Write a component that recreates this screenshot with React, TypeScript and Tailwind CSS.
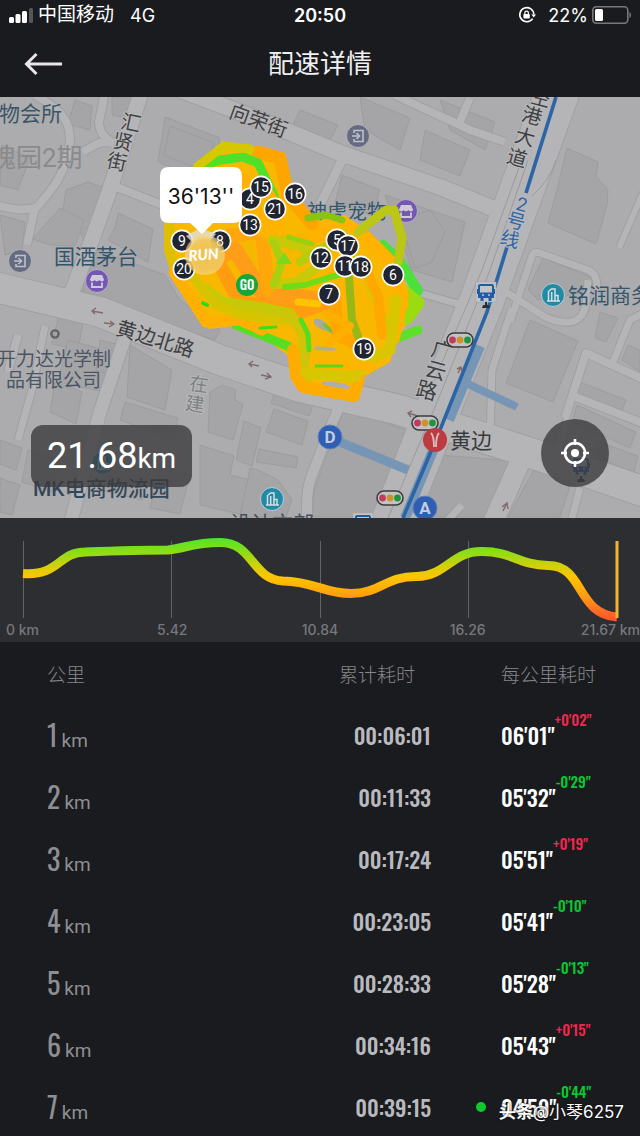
import React from 'react';

interface Split {
  km: number;
  total: string;
  pace: string;
  delta: string;
  fastest?: boolean;
}

interface Pin {
  label: string;
  x: number;
  y: number;
}

const splits: Split[] = [
  { km: 1, total: '00:06:01', pace: `06'01"`, delta: `+0'02"` },
  { km: 2, total: '00:11:33', pace: `05'32"`, delta: `-0'29"` },
  { km: 3, total: '00:17:24', pace: `05'51"`, delta: `+0'19"` },
  { km: 4, total: '00:23:05', pace: `05'41"`, delta: `-0'10"` },
  { km: 5, total: '00:28:33', pace: `05'28"`, delta: `-0'13"` },
  { km: 6, total: '00:34:16', pace: `05'43"`, delta: `+0'15"` },
  { km: 7, total: '00:39:15', pace: `04'59"`, delta: `-0'44"`, fastest: true }
];

const pins: Pin[] = [
  { label: '4', x: 250, y: 199 },
  { label: '15', x: 261, y: 187 },
  { label: '16', x: 295, y: 194 },
  { label: '21', x: 275, y: 209 },
  { label: '13', x: 250, y: 225 },
  { label: '9', x: 182, y: 241 },
  { label: '8', x: 220, y: 241 },
  { label: '20', x: 184, y: 269 },
  { label: '5', x: 337, y: 240 },
  { label: '17', x: 348, y: 246 },
  { label: '12', x: 321, y: 258 },
  { label: '11', x: 345, y: 266 },
  { label: '18', x: 361, y: 267 },
  { label: '6', x: 393, y: 275 },
  { label: '7', x: 329, y: 294 },
  { label: '19', x: 364, y: 349 }
];

// Street centre lines: [path, width]
const roads: [string, number][] = [
  ['M-5 287L100 312L220 360L300 387L400 410L450 427L540 456L645 492', 30],
  ['M558 90L482 300L440 405L392 525', 44],
  ['M142 90L108 195L90 245L68 302', 15],
  ['M126 334L100 412L70 525', 13],
  ['M165 84L260 120L340 153L440 187L492 208', 16],
  ['M343 158L320 205', 9],
  ['M114 186L165 206', 8],
  ['M35 95C58 108 70 118 70 140C66 175 52 190 37 207C25 212 14 209 -5 205', 8],
  ['M35 207L27 245', 8],
  ['M105 92L99 122C100 134 104 138 114 143', 8],
  ['M114 143C98 140 95 146 82 152', 8],
  ['M645 188L619 248', 6],
  ['M510 322L532 256Q534 251 540 253L588 270Q598 274 597 290', 7],
  ['M500 288L545 317Q580 332 586 305L588 280', 7],
  ['M512 308L492 370L490 438', 7],
  ['M565 418L586 353L645 380', 8],
  ['M645 312L630 320L613 362', 7],
  ['M573 396L645 424', 8],
  ['M568 418L552 470', 8],
  ['M520 462L492 525', 20],
  ['M580 488L570 525', 7],
  ['M462 505L446 522', 7],
  ['M341 403L329 430L312 475C306 490 307 505 307 525', 10],
  ['M387 250C408 262 412 275 403 300', 8],
  ['M395 95C430 112 450 120 470 130L505 142', 8],
  ['M470 98L460 122', 8],
  ['M420 293L462 305', 7],
  ['M18 335L8 372', 8],
  ['M45 326L32 390L18 440', 7]
];

const buildings = [
  'M165 117L220 138L208 182L158 162Z',
  'M170 126L214 143L205 172L164 155Z',
  'M63 210L66 190L88 182L110 190L86 245L80 232L60 213Z',
  'M36 235L60 208L84 220L75 246L50 245L30 238Z',
  'M118 213L153 229L148 262L108 240L115 227Z',
  'M97 250L165 275L180 300L220 330L215 340L80 298Z',
  'M2 145L30 158L18 190L0 185Z',
  'M0 215L25 222L22 250L5 255Z',
  'M75 100L92 106L90 130L68 124Z',
  'M112 97L135 97L128 118L112 115Z',
  'M300 110L338 125L325 150L288 135Z',
  'M360 97L410 118L400 150L365 130Z',
  'M425 130L470 150L460 176L420 160Z',
  'M440 100L495 122L485 150L450 130Z',
  'M342 175L380 190L372 215L335 203Z',
  'M385 195L465 222L452 282L412 270L398 230Z',
  'M400 220L430 210L445 232L432 262L415 268Z',
  'M567 148L598 162L596 176L608 190L607 205L596 244L548 223L557 190Z',
  'M543 258L596 279L590 292L538 300L528 290Z',
  'M530 320L578 341L553 402L506 383Z',
  'M600 312L618 318L606 342L595 338Z',
  'M628 345L640 350L640 372L622 360Z',
  'M580 382L626 400L620 416L574 396Z',
  'M577 405L636 432L630 448L572 422Z',
  'M600 442L638 456L634 472L596 458Z',
  'M130 345L172 370L165 410L127 397Z',
  'M125 402L178 418L174 440L120 420Z',
  'M60 310L84 318L78 350L52 344Z',
  'M68 340L112 352L104 392L58 382Z',
  'M100 340L120 345L112 375L96 370Z',
  'M55 382L82 392L76 424L50 412Z',
  'M0 440L22 448L16 470L0 464Z',
  'M28 450L60 460L52 492L22 482Z',
  'M0 478L20 485L12 515L0 512Z',
  'M108 460L150 470L142 500L100 490Z',
  'M160 465L190 475L180 514L150 508Z',
  'M210 392L222 385L236 390L235 400L243 404L233 440L208 432Z',
  'M276 389L314 402L309 416L271 403Z',
  'M274 409L308 421L302 445L266 432Z',
  'M259 449L298 457L296 468L256 462Z',
  'M244 421L261 428L252 466L236 460Z',
  'M200 445L234 456L230 475L250 480L240 514L200 505Z',
  'M258 470L278 480L292 500L286 517L240 517L250 468Z',
  'M344 409L406 430L382 500L372 517L312 517L314 490Z',
  'M440 455L514 461L490 517L420 517Z',
  'M535 468L572 480L560 517L508 517Z'
];

// Overlapping laps of the run, drawn back to front: [path, colour, width]
const laps: [string, string, number][] = [
  ['M383 245L400 262L418 291L404 292', '#4be03a', 10],
  ['M400 288L418 303L407 318', '#9bdc10', 13],
  ['M398 338L418 330', '#5de02a', 9],
  ['M236 325L288 346L298 357', '#58de20', 9],
  ['M258 152L280 158L288 195L312 224', '#ffa500', 13],
  ['M205 165L220 160L243 157L258 163L274 196', '#4fe02a', 9],
  ['M198 166L224 146L250 149', '#d6c800', 9],
  ['M232 178L262 185L278 212L270 240', '#ffb000', 14],
  ['M169 222L169 250L178 278L200 312', '#e0bf00', 10],
  ['M174 272L206 322L240 320L262 330', '#ffb000', 11],
  ['M250 205L290 245L345 226L366 238L392 264L402 296L393 338', '#ffb200', 14],
  ['M190 262L205 245L225 232L245 240L256 300', '#f5b800', 12],
  ['M205 262L235 250L262 292L320 300', '#ff9d18', 16],
  ['M228 236L262 232L268 290', '#ffa60a', 14],
  ['M218 262L240 302L300 312L335 300', '#ff9c10', 14],
  ['M255 228L320 252L345 290L350 330', '#ffb500', 12],
  ['M272 240L300 246L322 264L296 282L274 284', '#c8c908', 10],
  ['M300 262L318 250L350 238', '#b8cc0c', 9],
  ['M274 243L282 262L274 284', '#a9cf10', 8],
  ['M285 287L305 285L324 279L345 273', '#6fdc18', 6],
  ['M288 237L312 244', '#9bd010', 5],
  ['M308 218L326 215L342 220', '#88c410', 7],
  ['M342 232L368 280L386 325', '#d2c806', 8],
  ['M362 262L378 296L382 335', '#ffa800', 10],
  ['M334 290L338 335L360 345', '#ffa600', 13],
  ['M349 278L352 320L358 336', '#98b818', 8],
  ['M206 290L222 302L262 308L290 314', '#c6c808', 11],
  ['M192 276L215 304L238 314L270 320L290 320', '#d6c400', 9],
  ['M290 316L302 330L305 345L302 374L306 378', '#cfc408', 12],
  ['M301 320L308 334L309 350', '#54dc20', 5],
  ['M293 350L296 376L303 387L354 396L359 378', '#ffac00', 12],
  ['M306 373L355 377L364 362L390 350L396 300', '#d8c600', 11],
  ['M315 364L372 366', '#ffb400', 8],
  ['M260 328L276 327', '#46d81c', 3],
  ['M316 366L342 366', '#5bd81c', 3],
  ['M298 302L318 304', '#ffc400', 7],
  ['M203 303L207 305', '#35d820', 4],
  ['M326 314L350 326L328 344', '#ffaf00', 8],
  ['M358 232L386 210L394 210L402 238L398 262', '#bcc614', 9]
];

const SignalIcon = () => (
  <svg viewBox="0 0 26 16" className="h-4 w-[26px]" fill="#fff" aria-hidden="true">
    <rect x="1" y="10" width="5" height="6" rx="1.5" />
    <rect x="7.5" y="7" width="5" height="9" rx="1.5" />
    <rect x="14" y="4" width="5" height="12" rx="1.5" />
    <rect x="21" y="1" width="4" height="15" rx="1.5" fill="#55565a" />
  </svg>
);

const RotationLockIcon = () => (
  <svg viewBox="0 0 18 18" className="size-[18px]" fill="none" stroke="#fff" strokeWidth="1.6" aria-hidden="true">
    <path d="M14.6 12.6A7 7 0 1 1 15.8 8.6" />
    <path d="M13.4 8.6H18L15.7 11.6Z" fill="#fff" stroke="none" />
    <rect x="5.4" y="8" width="6.4" height="4.6" rx="0.8" fill="#fff" stroke="none" />
    <path d="M6.8 8.4V7a1.8 1.8 0 0 1 3.6 0V8.4" strokeWidth="1.2" />
  </svg>
);

const BatteryIcon = () => (
  <svg viewBox="0 0 40 18" className="h-[18px] w-10" fill="none" aria-hidden="true">
    <rect x="0.8" y="0.8" width="35" height="16.4" rx="3.5" stroke="#77787b" strokeWidth="1.6" />
    <rect x="3" y="3" width="8" height="12" rx="1.5" fill="#fff" />
    <path d="M37.5 6C39.6 6.8 39.6 11.2 37.5 12Z" fill="#77787b" />
  </svg>
);

const BusStop = ({ x, y }: { x: number; y: number }) => (
  <g transform={`translate(${x} ${y})`}>
    <rect x="-10" y="-11" width="20" height="20" fill="#c3c4c6" stroke="#a6a7a9" strokeWidth="0.6" />
    <path d="M-6 -8H6Q7 -8 7 -7V4H-7V-7Q-7 -8 -6 -8Z" fill="none" stroke="#1f5da8" strokeWidth="2" />
    <path d="M-7 -0.5H7V4H-7ZM-5.500 4H-2.500V8H-5.500ZM2.500 4H5.500V8H2.500ZM-9 -4H-7V1H-9ZM7 -4H9V1H7Z" fill="#1f5da8" />
    <path d="M-4 2H-2M2 2H4" stroke="#c3c4c6" strokeWidth="1.6" />
    <path d="M-1 9H1V12H3L4 15H-4L-3 12H-1Z" fill="#2c2e33" />
  </g>
);

const TrafficLight = ({ x, y }: { x: number; y: number }) => (
  <g transform={`translate(${x} ${y})`}>
    <rect x="-13" y="-7" width="26" height="14" rx="7" fill="#c3c3c4" stroke="#3c3d40" strokeWidth="1.6" />
    <circle cx="-7.5" r="3.4" fill="#c23a5c" />
    <circle cx="0" r="3.4" fill="#c9942a" />
    <circle cx="7.5" r="3.4" fill="#1f9440" />
  </g>
);

const OfficeMark = ({ x, y }: { x: number; y: number }) => (
  <g transform={`translate(${x} ${y})`}>
    <circle r="11.5" fill="#238aa6" stroke="#b9cdd3" strokeWidth="1" />
    <path d="M-4.5 6V-3.5L-1.5 -6H2V6M-1.3 -3V6M5 6V0.5H2M-6 6H7" stroke="#d5dfe2" strokeWidth="1.5" fill="none" />
  </g>
);

const ShopMark = ({ x, y }: { x: number; y: number }) => (
  <g transform={`translate(${x} ${y})`}>
    <circle r="11.5" fill="#7458b0" stroke="#b9aed2" strokeWidth="1" />
    <path d="M-5 -6H5L7 -1.5C7 1 3.5 1 2.3 -1C1.5 0.8 -1.5 0.8 -2.3 -1C-3.5 1 -7 1 -7 -1.5Z" fill="#cfcad9" />
    <path d="M-5 1.5V6H5V1.5" fill="none" stroke="#cfcad9" strokeWidth="1.8" />
  </g>
);

const GateMark = ({ x, y }: { x: number; y: number }) => (
  <g transform={`translate(${x} ${y})`}>
    <circle r="11.5" fill="#656b80" stroke="#b3b5bd" strokeWidth="1" />
    <path d="M-4 -3V-5.500H5V5.500H-4V3M-6 0H1M-1.500 -3L1.500 0L-1.500 3" fill="none" stroke="#bfc1c9" strokeWidth="1.6" />
  </g>
);

const ExitMark = ({ x, y, label }: { x: number; y: number; label: string }) => (
  <g transform={`translate(${x} ${y})`}>
    <circle r="12" fill="#2f5fb3" stroke="#5f82bf" strokeWidth="1" />
    <text y="6" textAnchor="middle" fontSize="17" fontWeight="700" fill="#c4cde0">{label}</text>
  </g>
);

// Street names run along the street, one character after another
const StreetName = ({ chars, size, fill }: { chars: [string, number, number, number][]; size: number; fill: string }) => (
  <g fontSize={size} fill={fill} textAnchor="middle" stroke="#b9babc" strokeWidth="2" paintOrder="stroke">
    {chars.map(([char, x, y, angle]) => (
      <text key={char} transform={`translate(${x} ${y}) rotate(${angle})`} y={Math.round(size * 0.37)}>{char}</text>
    ))}
  </g>
);

const RouteMap = () => (
  <svg
    viewBox="0 97 640 421"
    className="block h-auto w-full font-['Roboto','Noto_Sans_CJK_SC',sans-serif]"
    role="img"
    aria-label="跑步路线"
  >
    <rect y="97" width="640" height="421" fill="#acacae" />
    <g fill="#a5a5a7" stroke="#99999b" strokeWidth="0.8">
      {buildings.map(d => <path key={d} d={d} />)}
    </g>
    <g fill="none" stroke="#9d9d9f" strokeLinejoin="round">
      {roads.map(([d, width]) => <path key={d} d={d} strokeWidth={width + 1.6} />)}
    </g>
    <g fill="none" stroke="#b5b5b7" strokeLinejoin="round">
      {roads.map(([d, width]) => <path key={d} d={d} strokeWidth={width} />)}
    </g>
    <g fill="none" stroke="#9a9a9c" strokeWidth="1">
      <path d="M528 160L490 270L440 395L388 518" />
      <path d="M520 165L482 270L428 395" />
      <path d="M556 160Q550 180 532 196" />
    </g>

    {/* Metro line and underground passages */}
    <g fill="none" stroke="#7796b5">
      <path d="M480 346L449 420" strokeWidth="10" />
      <path d="M466 383L517 407" strokeWidth="8" />
      <path d="M340 442L408 470" strokeWidth="9" />
      <path d="M434 448L405 518" strokeWidth="10" />
    </g>
    <path d="M556 97L526 193M507 247L487 312L456 390L440 430L403 518" stroke="#2b65a6" strokeWidth="3.6" fill="none" />

    {/* Direction arrows */}
    <g fill="none" stroke="#806a6c" strokeWidth="1.4">
      <path d="M92 311L103 313M96 308L92 311L95 314" />
      <path d="M104 323L114 324M110 321L114 324L109 327" />
      <path d="M249 364L259 366M253 361L249 364L252 367" />
      <path d="M261 375L271 377M267 373L271 377L265 379" />
      <path d="M408 413L418 416M412 411L408 413L411 417" />
      <path d="M458 373L461 367M457 369L461 367L462 372" />
      <path d="M503 511L507 503M502 507L507 503L508 509" />
    </g>

    <text x="-1" y="121" fontSize="21" fill="#3b5568">物会所</text>
    <text x="-10" y="167" fontSize="26" fill="#8a8a8c">瑰园2期</text>
    <StreetName size={20} fill="#414144" chars={[['汇', 131, 123, 12], ['贤', 123, 142, 12], ['街', 117, 162, 12]]} />
    <text transform="translate(228 117) rotate(20)" fontSize="20" fill="#414144">向荣街</text>
    <StreetName
      size={20}
      fill="#414144"
      chars={[['空', 541, 98, 15], ['港', 532, 116, 15], ['大', 525, 137, 15], ['道', 517, 158, 15]]}
    />
    <StreetName size={19} fill="#2f66a8" chars={[['2', 522, 204, 15], ['号', 516, 221, 15], ['线', 510, 239, 15]]} />
    <StreetName size={21} fill="#414144" chars={[['广', 442, 350, 15], ['云', 436, 370, 15], ['路', 427, 390, 15]]} />
    <StreetName size={19} fill="#808184" chars={[['在', 199, 384, 8], ['建', 195, 404, 8]]} />
    <text transform="translate(115 334) rotate(17)" fontSize="20" fill="#3e3f42">黄边北路</text>
    <text x="54" y="264" fontSize="21" fill="#33536a">国酒茅台</text>
    <text x="307" y="219" fontSize="20" fill="#35556c">神虎宠物</text>
    <text x="568" y="303" fontSize="21" fill="#35556c">铭润商务</text>
    <text x="-3" y="366" fontSize="19" fill="#4b5564">开力达光学制</text>
    <text x="6" y="387" fontSize="19" fill="#4b5564">品有限公司</text>
    <text x="33" y="496" fontSize="21" fontWeight="500" fill="#33475a">MK电商物流园</text>
    <text x="230" y="531" fontSize="21" fill="#45525e">设计文部</text>
    <text x="450" y="448" fontSize="21" fill="#3a3b3e">黄边</text>

    <GateMark x={20} y={261} />
    <GateMark x={358} y={136} />
    <ShopMark x={97} y={281} />
    <ShopMark x={406} y={211} />
    <OfficeMark x={553} y={295} />
    <OfficeMark x={272} y={499} />
    <OfficeMark x={103} y={463} />
    <circle cx="55" cy="334" r="3.6" fill="none" stroke="#626367" strokeWidth="2.4" />
    <TrafficLight x={460} y={340} />
    <TrafficLight x={425} y={423} />
    <TrafficLight x={390} y={498} />
    <BusStop x={486} y={293} />
    <BusStop x={581} y={467} />
    <BusStop x={363} y={524} />
    <ExitMark x={330} y={437} label="D" />
    <ExitMark x={425} y={508} label="A" />
    <circle cx="435" cy="440" r="12" fill="#bd3a40" />
    <path d="M431 433Q434 436 434 447M439 433Q436 436 436 447" fill="none" stroke="#d9bfc0" strokeWidth="1.8" />

    {/* Recorded route */}
    <path
      d="M196 165L206 158L224 145L252 148L266 150L283 158L287 182L296 200L312 222L345 215L368 232L388 254L402 282L414 296L410 318L396 342L390 362L362 378L357 400L302 391L291 376L289 356L262 336L234 326L209 329L192 302L171 270L164 242L166 215Z"
      fill="#f8b800"
    />
    <g fill="none" strokeLinecap="round" strokeLinejoin="round">
      {laps.map(([d, colour, width]) => <path key={d} d={d} stroke={colour} strokeWidth={width} />)}
    </g>
    <path d="M276 264L284 252L292 264Z" fill="#7fd820" />
    <path d="M314 319Q325 317 332 333Q320 330 314 324Z" fill="#a8a9a3" />
    <path d="M322 324Q330 322 333 334Q326 330 322 324Z" fill="#7fc030" />
    <path d="M316 346L336 348L334 351L314 350Z" fill="#b0b08c" />
    <path d="M322 382Q335 380 350 386L348 389Q332 388 322 384Z" fill="#adadaf" />

    {/* Kilometre pins */}
    {pins.map(({ label, x, y }) => (
      <g key={label}>
        <circle cx={x} cy={y} r="10.6" fill="#212531" stroke="#fff" strokeWidth="1.6" />
        <text x={x} y={y + 5} textAnchor="middle" fontSize="14" fill="#fff">{label}</text>
      </g>
    ))}
    <circle cx="247" cy="285" r="11" fill="#12a83a" />
    <text x="247" y="290" textAnchor="middle" fontSize="13" className="font-['Oswald','Roboto',sans-serif] font-medium" fill="#fff">GO</text>

    <defs>
      <radialGradient id="runner">
        <stop offset="0" stopColor="#efc250" />
        <stop offset="0.75" stopColor="#f0c75c" stopOpacity="0.95" />
        <stop offset="1" stopColor="#f4d88a" stopOpacity="0.6" />
      </radialGradient>
    </defs>
    <path d="M186 236L200 228L216 234L208 244H194Z" fill="#e2e0dc" opacity="0.8" />
    <circle cx="205" cy="255" r="20" fill="url(#runner)" />
    <text transform="translate(204 260) rotate(-5)" textAnchor="middle" fontSize="15" className="font-['Lato','Roboto',sans-serif] font-black italic" fill="#fff">RUN</text>

    {/* Bubble with the elapsed time */}
    <path d="M169 167H233Q242 167 242 176V214Q242 223 233 223H213L202 234L190 223H169Q160 223 160 214V176Q160 167 169 167Z" fill="#fff" />
    <text x="201" y="204" textAnchor="middle" fontSize="21" className="font-['Inter','Roboto',sans-serif]" fill="#111">36'13''</text>
  </svg>
);

const PaceChart = () => (
  <section className="bg-[#2d2e32] pt-[18px] pb-1" aria-label="配速曲线">
    <svg viewBox="0 536 640 86" className="block h-auto w-full" fill="none" aria-hidden="true">
      <defs>
        <linearGradient id="pace" gradientUnits="userSpaceOnUse" x1="0" y1="538" x2="0" y2="620">
          <stop offset="0" stopColor="#4de626" />
          <stop offset="0.18" stopColor="#90dd16" />
          <stop offset="0.34" stopColor="#d2d00c" />
          <stop offset="0.48" stopColor="#ffc400" />
          <stop offset="0.7" stopColor="#ff9e10" />
          <stop offset="0.9" stopColor="#ff6a25" />
          <stop offset="1" stopColor="#ff5428" />
        </linearGradient>
      </defs>
      <path d="M23.500 541V618M171.500 541V618M320.500 541V618M468.500 541V618" stroke="#626367" strokeWidth="1" />
      <path
        d="M23 573.500C60 576 58 552 85 552C112 551 145 550 168 550C186 548 194 542.500 220 542.500C253 542 252 580 283 581C312 581 324 593.500 351 593.500C381 593 386 576 417 576.500C446 576 452 551.500 481 551.500C512 551 518 565 548 565.500C584 565 576 614 617 617"
        stroke="url(#pace)"
        strokeWidth="9"
      />
      <path d="M617 541V618" stroke="#f2b430" strokeWidth="3" />
    </svg>
    <div className="grid grid-cols-[2fr_3fr_3fr_3fr_2fr] text-center font-['Inter',sans-serif] text-[14px] leading-4 font-medium text-[#77787c]">
      <span className="pl-1.5 text-left">0 km</span>
      <span>5.42</span>
      <span>10.84</span>
      <span>16.26</span>
      <span className="text-right">21.67 km</span>
    </div>
  </section>
);

const SplitRow: React.FC<{ split: Split }> = ({ split }) => (
  <tr className="h-[62px] font-['Oswald','Roboto',sans-serif]">
    <th scope="row" className="pb-1 pl-[47px] text-left font-normal text-[#8e8f93]">
      <span className="text-[28px]">{split.km}</span>
      <span className="ml-1 font-['Roboto',sans-serif] text-[19px]">km</span>
    </th>
    <td className="pb-1 text-right text-[22px] font-medium text-[#b9babf]">{split.total}</td>
    <td className="pb-1 pl-[70px]">
      <div className="relative flex items-center">
        {split.fastest && <span className="absolute -left-[25px] size-2.5 rounded-full bg-[#0ecb2c]" />}
        <span className="text-[22px] font-medium text-white">{split.pace}</span>
        <span
          className={`pb-8 text-[15px] leading-4 font-medium ${split.delta.startsWith('+') ? 'text-[#f0284f]' : 'text-[#0ac833]'}`}
        >
          {split.delta}
        </span>
      </div>
    </td>
  </tr>
);

const App: React.FC = () => {
  return (
    <div className="relative flex h-screen flex-col overflow-hidden bg-[#1a1b1e] font-['Inter','Noto_Sans_CJK_SC',sans-serif] text-white">
      {/* Status bar */}
      <div className="grid h-[30px] shrink-0 grid-cols-3 items-center px-2 text-[18px]">
        <div className="flex items-center gap-1">
          <SignalIcon />
          <span className="text-[19px]">中国移动</span>
          <span className="ml-3">4G</span>
        </div>
        <span className="text-center font-semibold">20:50</span>
        <div className="flex items-center justify-end gap-1">
          <RotationLockIcon />
          <span className="ml-2">22%</span>
          <BatteryIcon />
        </div>
      </div>

      {/* Title bar */}
      <header className="grid h-[67px] shrink-0 grid-cols-[1fr_auto_1fr] items-center px-6">
        <button type="button" aria-label="返回" className="justify-self-start">
          <svg viewBox="0 0 38 24" className="h-6 w-[38px]" fill="none" stroke="#e9e6ec" strokeWidth="3" aria-hidden="true">
            <path d="M38 12H3M12.500 2L2.500 12L12.500 22" />
          </svg>
        </button>
        <h1 className="text-[26px] text-[#f0f0f2]">配速详情</h1>
      </header>

      {/* Map */}
      <section className="relative shrink-0">
        <RouteMap />
        <div className="absolute bottom-[31px] left-[31px] flex h-[62px] items-center rounded-xl bg-[#3c3c3e]/80 px-4 font-['Roboto',sans-serif]">
          <p className="text-[36px]">
            21.68<span className="text-[28px]">km</span>
          </p>
        </div>
        <button
          type="button"
          aria-label="定位"
          className="absolute right-[31px] bottom-[31px] flex size-[68px] items-center justify-center rounded-full bg-[#3c3c3e]/80"
        >
          <svg viewBox="0 0 28 28" className="size-7" fill="none" stroke="#fff" strokeWidth="2.6" aria-hidden="true">
            <circle cx="14" cy="14" r="10" />
            <circle cx="14" cy="14" r="4" fill="#fff" stroke="none" />
            <path d="M14 0V6M14 22V28M0 14H6M22 14H28" />
          </svg>
        </button>
      </section>

      <PaceChart />

      {/* Splits */}
      <main className="min-h-0 flex-1 overflow-y-auto [scrollbar-width:none]">
        <table className="w-full table-fixed">
          <colgroup>
            <col className="w-[35%]" />
            <col />
            <col className="w-[209px]" />
          </colgroup>
          <thead>
            <tr className="h-16 text-[19px] text-[#85868a]">
              <th scope="col" className="pt-1 pl-[47px] text-left font-light">公里</th>
              <th scope="col" className="pt-1 pr-4 text-right font-light">累计耗时</th>
              <th scope="col" className="pt-1 pl-[70px] text-left font-light">每公里耗时</th>
            </tr>
          </thead>
          <tbody>
            {splits.map(split => <SplitRow key={split.km} split={split} />)}
          </tbody>
        </table>
      </main>

      <p className="absolute right-4 bottom-3 text-[17px] leading-6 [text-shadow:0_0_2px_#000]">
        <b>头条</b>@小琴6257
      </p>
    </div>
  );
};

export default App;
